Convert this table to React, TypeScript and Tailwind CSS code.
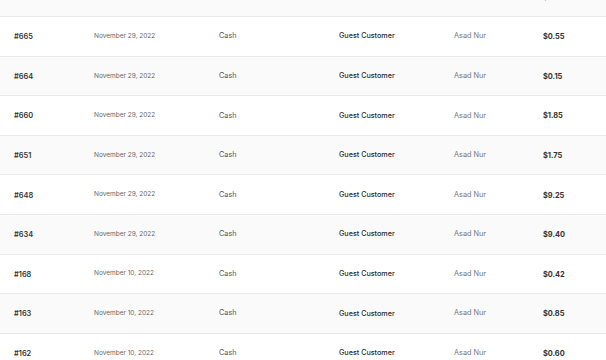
import React from "react";

const rows = [
  { id: "#666", date: "November 29, 2022", amt: "$0.35" },
  { id: "#665", date: "November 29, 2022", amt: "$0.55" },
  { id: "#664", date: "November 29, 2022", amt: "$0.15" },
  { id: "#660", date: "November 29, 2022", amt: "$1.85" },
  { id: "#651", date: "November 29, 2022", amt: "$1.75" },
  { id: "#648", date: "November 29, 2022", amt: "$9.25" },
  { id: "#634", date: "November 29, 2022", amt: "$9.40" },
  { id: "#168", date: "November 10, 2022", amt: "$0.42" },
  { id: "#163", date: "November 10, 2022", amt: "$0.85" },
  { id: "#162", date: "November 10, 2022", amt: "$0.60" },
];

export default function App() {
  return (
    <div
      className="w-[606px] h-[360px] overflow-hidden bg-white"
      style={{ fontFamily: "Inter, 'Noto Sans', sans-serif" }}
    >
      <div className="mt-[-22.6px]">
        {rows.map((r, i) => (
          <div
            key={r.id}
            className={`grid grid-cols-[94px_125px_120px_115px_89px_1fr] items-center h-[39.6px] border-b border-[#e9e9e9] pt-[1px] ${
              i % 2 === 0 ? "bg-[#fafafa]" : "bg-white"
            }`}
          >
            <div className="pl-[14px] text-[7.4px] font-semibold text-[#333]">{r.id}</div>
            <div className="text-[6.5px] text-[#666]">{r.date}</div>
            <div className="text-[7.3px] text-[#555]">Cash</div>
            <div className="text-[7.2px] font-medium text-[#2a2a2a]">Guest Customer</div>
            <div className="text-[7.3px] text-[#777]">Asad Nur</div>
            <div className="text-[7.4px] font-bold text-[#333]">{r.amt}</div>
          </div>
        ))}
      </div>
    </div>
  );
}
